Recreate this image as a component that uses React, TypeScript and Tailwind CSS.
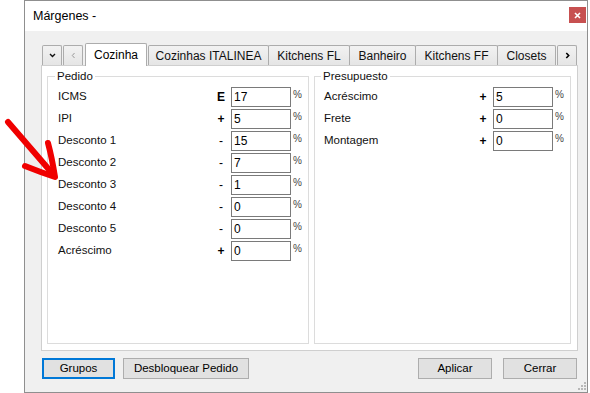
import React from "react";

const font = { fontFamily: '"Liberation Sans", Arial, sans-serif' };

type Row = { label: string; sign: string; value: string };

const pedido: Row[] = [
  { label: "ICMS", sign: "E", value: "17" },
  { label: "IPI", sign: "+", value: "5" },
  { label: "Desconto 1", sign: "-", value: "15" },
  { label: "Desconto 2", sign: "-", value: "7" },
  { label: "Desconto 3", sign: "-", value: "1" },
  { label: "Desconto 4", sign: "-", value: "0" },
  { label: "Desconto 5", sign: "-", value: "0" },
  { label: "Acréscimo", sign: "+", value: "0" },
];

const presupuesto: Row[] = [
  { label: "Acréscimo", sign: "+", value: "5" },
  { label: "Frete", sign: "+", value: "0" },
  { label: "Montagem", sign: "+", value: "0" },
];

function FieldRow({ row, labelW, pl }: { row: Row; labelW: string; pl: string }) {
  return (
    <div className={`flex h-[20px] items-center ${pl}`}>
      <div className={`${labelW} text-[11.5px] leading-none text-[#111]`}>{row.label}</div>
      <div
        className={`w-[16px] text-center text-[12px] leading-none text-black ${
          row.sign === "-" ? "font-normal" : "font-bold"
        }`}
      >
        {row.sign}
      </div>
      <div className="ml-[2px] flex h-[20px] w-[60px] items-center border border-[#7a7a7a] bg-white pl-[2px] text-[12px] leading-none text-black">
        {row.value}
      </div>
      <div className="ml-[2px] self-start pt-[3px] text-[10px] leading-none text-[#444]">%</div>
    </div>
  );
}

function Tab({ label, w, selected }: { label: string; w: string; selected?: boolean }) {
  if (selected) {
    return (
      <div
        className={`relative z-10 mb-[-1px] flex h-[23px] ${w} items-center justify-center rounded-t-[2px] border border-b-0 border-[#acacac] bg-white pb-[1px] text-[12px] leading-none text-black`}
      >
        {label}
      </div>
    );
  }
  return (
    <div
      className={`flex h-[20px] ${w} ml-[-1px] items-center justify-center rounded-t-[2px] border border-b-0 border-[#acacac] bg-gradient-to-b from-[#f2f2f2] to-[#e5e5e5] text-[12px] leading-none text-[#111]`}
    >
      {label}
    </div>
  );
}

function SmallBtn({ children, ml }: { children: React.ReactNode; ml: string }) {
  return (
    <div
      className={`flex h-[20px] w-[20px] ${ml} items-center justify-center rounded-t-[2px] border border-b-0 border-[#acacac] bg-gradient-to-b from-[#f2f2f2] to-[#e5e5e5]`}
    >
      {children}
    </div>
  );
}

function Button({ label, w, focused }: { label: string; w: string; focused?: boolean }) {
  return (
    <div
      className={`flex h-[21px] ${w} items-center justify-center bg-[#e1e1e1] text-[11.5px] leading-none text-black ${
        focused ? "border-2 border-[#0078d7]" : "border border-[#adadad]"
      }`}
    >
      {label}
    </div>
  );
}

export default function App() {
  return (
    <div className="relative flex h-[393px] w-[590px] overflow-hidden bg-white" style={font}>
      <div className="ml-[24px] flex h-[393px] w-[564px] flex-col border border-[#8f8f8f] bg-white">
        {/* Title bar */}
        <div className="flex h-[30px] shrink-0 items-start justify-between bg-white">
          <div className="pl-[8px] pt-[9px] text-[12.5px] leading-none text-black">Márgenes -</div>
          <div className="mr-[1px] mt-[6px] flex h-[16px] w-[17px] items-center justify-center bg-[#c75050]">
            <svg width="7" height="7" viewBox="0 0 7 7">
              <path d="M1 1 L6 6 M6 1 L1 6" stroke="white" strokeWidth="1.6" />
            </svg>
          </div>
        </div>

        {/* Body */}
        <div className="flex flex-1 flex-col bg-[#f0f0f0] pb-[13px] pl-[16px] pr-[9px] pt-[12px]">
          {/* Tab strip */}
          <div className="flex h-[22px] items-end pl-[1px]">
            <SmallBtn ml="">
              <svg width="7" height="5" viewBox="0 0 7 5">
                <path d="M1 1 L3.5 3.5 L6 1" stroke="#111" strokeWidth="1.4" fill="none" />
              </svg>
            </SmallBtn>
            <SmallBtn ml="ml-[1px]">
              <svg width="5" height="7" viewBox="0 0 5 7">
                <path d="M3.5 1 L1.3 3.5 L3.5 6" stroke="#9a9a9a" strokeWidth="1" fill="none" />
              </svg>
            </SmallBtn>
            <div className="ml-[2px] flex items-end">
              <Tab label="Cozinha" w="w-[62px]" selected />
              <div className="ml-[2px] flex items-end">
                <Tab label="Cozinhas ITALINEA" w="w-[121px]" />
                <Tab label="Kitchens FL" w="w-[82px]" />
                <Tab label="Banheiro" w="w-[67px]" />
                <Tab label="Kitchens FF" w="w-[83px]" />
                <Tab label="Closets" w="w-[59px]" />
              </div>
            </div>
            <SmallBtn ml="ml-[1px]">
              <svg width="5" height="7" viewBox="0 0 5 7">
                <path d="M1.3 1 L3.7 3.5 L1.3 6" stroke="#000" strokeWidth="1.6" fill="none" />
              </svg>
            </SmallBtn>
          </div>

          {/* Panel */}
          <div className="flex h-[286px] border border-[#cfcfcf] bg-white pb-[6px] pl-[5px] pr-[6px] pt-[4px]">
            <fieldset className="h-full w-[262px] border border-[#dcdcdc]">
              <legend className="ml-[7px] px-[2px] text-[11.5px] leading-[13px] text-[#111]">Pedido</legend>
              <div className="mt-[4px] flex flex-col gap-[2px]">
                {pedido.map((r) => (
                  <FieldRow key={r.label + r.sign} row={r} labelW="w-[155px]" pl="pl-[10px]" />
                ))}
              </div>
            </fieldset>
            <fieldset className="ml-[5px] h-full w-[257px] border border-[#dcdcdc]">
              <legend className="ml-[6px] px-[2px] text-[11.5px] leading-[13px] text-[#111]">Presupuesto</legend>
              <div className="mt-[4px] flex flex-col gap-[2px]">
                {presupuesto.map((r) => (
                  <FieldRow key={r.label} row={r} labelW="w-[151px]" pl="pl-[9px]" />
                ))}
              </div>
            </fieldset>
          </div>

          {/* Buttons */}
          <div className="mt-[7px] flex items-center pl-[1px] pr-[1px]">
            <Button label="Grupos" w="w-[73px]" focused />
            <div className="ml-[8px]">
              <Button label="Desbloquear Pedido" w="w-[126px]" />
            </div>
            <div className="flex-1" />
            <Button label="Aplicar" w="w-[74px]" />
            <div className="ml-[11px]">
              <Button label="Cerrar" w="w-[74px]" />
            </div>
          </div>
        </div>
      </div>

      {/* resize grip */}
      <svg className="absolute left-[578px] top-[382px]" width="9" height="9" viewBox="0 0 9 9">
        <rect x="6" y="0" width="2" height="2" fill="#b8b8b8" />
        <rect x="3" y="3" width="2" height="2" fill="#b8b8b8" />
        <rect x="6" y="3" width="2" height="2" fill="#b8b8b8" />
        <rect x="0" y="6" width="2" height="2" fill="#b8b8b8" />
        <rect x="3" y="6" width="2" height="2" fill="#b8b8b8" />
        <rect x="6" y="6" width="2" height="2" fill="#b8b8b8" />
      </svg>

      {/* red annotation arrow */}
      <svg className="pointer-events-none absolute left-0 top-0" width="590" height="393" viewBox="0 0 590 393">
        <path d="M8 122 L52 173" stroke="#f00000" strokeWidth="6" strokeLinecap="round" fill="none" />
        <path
          d="M48 143 Q52 158 55 177 Q40 172 25 166"
          stroke="#f00000"
          strokeWidth="6"
          strokeLinecap="round"
          strokeLinejoin="round"
          fill="none"
        />
      </svg>
    </div>
  );
}
